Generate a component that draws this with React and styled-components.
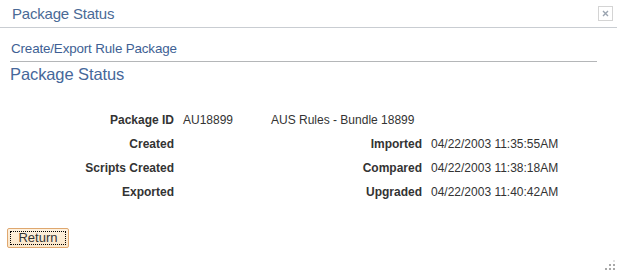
import React from 'react'
import styled, { createGlobalStyle } from 'styled-components'

const GlobalStyle = createGlobalStyle`
    html, body {
        margin: 0;
        padding: 0;
        background: #ffffff;
        font-family: Arial, "Liberation Sans", sans-serif;
    }
`

const Window = styled.div`
    width: 617px;
    height: 272px;
    display: flex;
    flex-direction: column;
    background: #ffffff;
    overflow: hidden;
`

const TitleBar = styled.div`
    height: 28px;
    display: flex;
    align-items: center;
    justify-content: space-between;
    padding: 0 4px 0 12px;
    border-bottom: 1px solid #c9cdd2;
    box-sizing: border-box;
`

const TitleText = styled.span`
    font-size: 15px;
    color: #4a6a96;
    letter-spacing: -0.2px;
    padding-bottom: 1px;
`

const CloseBox = styled.div`
    width: 13px;
    height: 13px;
    border: 1px solid #d4d4d4;
    display: flex;
    align-items: center;
    justify-content: center;
    margin-bottom: 1px;
`

const Body = styled.div`
    flex: 1;
    display: flex;
    flex-direction: column;
    padding: 13px 20px 0 10px;
    position: relative;
`

const Breadcrumb = styled.div`
    font-size: 13.4px;
    color: #3e5f94;
    padding: 0 0 5px 1px;
    border-bottom: 1px solid #b4b6b8;
    letter-spacing: -0.15px;
`

const PageTitle = styled.h1`
    margin: 3px 0 0 0;
    font-size: 16.5px;
    font-weight: normal;
    color: #46679a;
    letter-spacing: -0.1px;
`

const Fields = styled.div`
    display: grid;
    grid-template-columns: 173px 88px 160px auto;
    grid-auto-rows: 24px;
    margin-top: 24px;
    font-size: 12px;
    color: #333333;
`

const Label = styled.div`
    font-weight: bold;
    padding-right: 9px;
    display: flex;
    align-items: center;
    justify-content: flex-end;
    white-space: nowrap;
`

const Value = styled.div`
    display: flex;
    align-items: center;
    grid-column: ${p => (p.$span ? 'span 2' : 'auto')};
    white-space: nowrap;
`

const ButtonRow = styled.div`
    margin-top: 24px;
    margin-left: -3px;
`

const ReturnButton = styled.button`
    width: 62px;
    height: 20px;
    padding: 2px;
    background: linear-gradient(#fdf1df, #fbe6c8);
    border: 1px solid #dfa76f;
    border-radius: 2px;
    font-family: Arial, "Liberation Sans", sans-serif;
    font-size: 13px;
    color: #333333;
    cursor: pointer;
    box-sizing: border-box;

    span {
        display: block;
        height: 100%;
        border: 1px dotted #000000;
        line-height: 12px;
        box-sizing: border-box;
    }
`

const Grip = styled.svg`
    position: absolute;
    right: 2px;
    bottom: 2px;
`

const rows = [
    { label: 'Created', right: 'Imported', date: '04/22/2003 11:35:55AM' },
    { label: 'Scripts Created', right: 'Compared', date: '04/22/2003 11:38:18AM' },
    { label: 'Exported', right: 'Upgraded', date: '04/22/2003 11:40:42AM' },
]

const App = () => {
    return (
        <Window>
            <GlobalStyle />
            <TitleBar>
                <TitleText>Package Status</TitleText>
                <CloseBox>
                    <svg width="7" height="7" viewBox="0 0 7 7">
                        <path d="M1 1L6 6M6 1L1 6" stroke="#9aa4b0" strokeWidth="1.4" />
                    </svg>
                </CloseBox>
            </TitleBar>
            <Body>
                <Breadcrumb>Create/Export Rule Package</Breadcrumb>
                <PageTitle>Package Status</PageTitle>
                <Fields>
                    <Label>Package ID</Label>
                    <Value>AU18899</Value>
                    <Value $span>AUS Rules - Bundle 18899</Value>
                    {rows.map(r => (
                        <React.Fragment key={r.label}>
                            <Label>{r.label}</Label>
                            <Value />
                            <Label>{r.right}</Label>
                            <Value>{r.date}</Value>
                        </React.Fragment>
                    ))}
                </Fields>
                <ButtonRow>
                    <ReturnButton><span>Return</span></ReturnButton>
                </ButtonRow>
                <Grip width="10" height="10" viewBox="0 0 10 10">
                    <rect x="8" y="0" width="2" height="2" fill="#e2e2e2" />
                    <rect x="4" y="4" width="2" height="2" fill="#a8a8a8" />
                    <rect x="8" y="4" width="2" height="2" fill="#a8a8a8" />
                    <rect x="0" y="8" width="2" height="2" fill="#a8a8a8" />
                    <rect x="4" y="8" width="2" height="2" fill="#a8a8a8" />
                    <rect x="8" y="8" width="2" height="2" fill="#a8a8a8" />
                </Grip>
            </Body>
        </Window>
    )
}

export default App
